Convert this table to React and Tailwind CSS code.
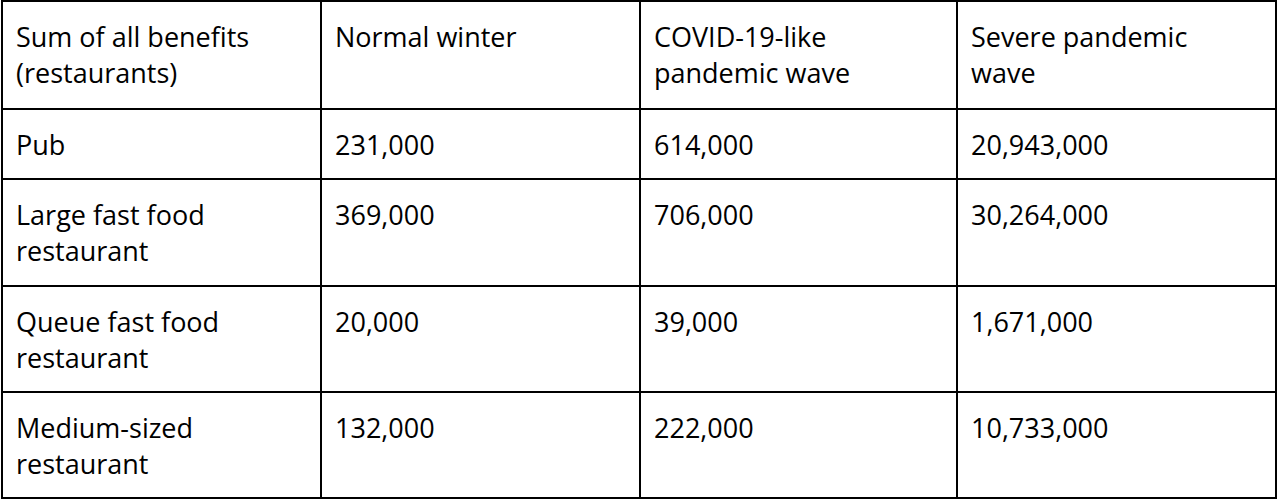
import React from "react";

const rows = [
  { h: "h-[108px]", cells: ["Sum of all benefits (restaurants)", "Normal winter", "COVID-19-like pandemic wave", "Severe pandemic wave"] },
  { h: "h-[70px]", cells: ["Pub", "231,000", "614,000", "20,943,000"] },
  { h: "h-[107px]", cells: ["Large fast food restaurant", "369,000", "706,000", "30,264,000"] },
  { h: "h-[106px]", cells: ["Queue fast food restaurant", "20,000", "39,000", "1,671,000"] },
  { h: "h-[104px]", cells: ["Medium-sized restaurant", "132,000", "222,000", "10,733,000"] },
];

export default function App() {
  return (
    <div className="w-[1280px] h-[503px] bg-white overflow-hidden">
      <div
        className="ml-[1px] w-[1276px] border-2 border-black grid grid-cols-[319px_319px_317px_317px] text-black text-[27px] leading-[36px]"
        style={{ fontFamily: '"Open Sans", "Noto Sans", sans-serif' }}
      >
        {rows.map((row, ri) =>
          row.cells.map((text, ci) => (
            <div
              key={`${ri}-${ci}`}
              className={`${row.h} pl-[13px] pr-[22px] pt-[17px] border-black ${ci < 3 ? "border-r-2" : ""} ${ri < rows.length - 1 ? "border-b-2" : ""}`}
            >
              {text}
            </div>
          ))
        )}
      </div>
    </div>
  );
}
